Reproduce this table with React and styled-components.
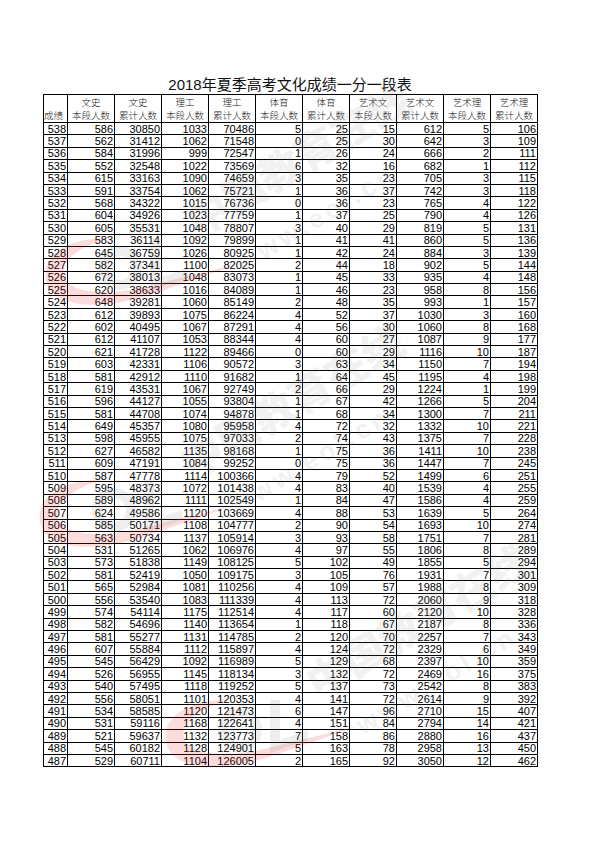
import React from 'react';
import styled, { createGlobalStyle } from 'styled-components';

const GlobalStyle = createGlobalStyle`
   html, body {
      margin: 0;
      padding: 0;
      background: #ffffff;
   }
`;

const Page = styled.div`
   position: relative;
   width: 600px;
   height: 848px;
   overflow: hidden;
   padding-top: 76px;
   box-sizing: border-box;
   background: #ffffff;
`;

const Title = styled.h1`
   margin: 0 0 0 43px;
   width: 494px;
   height: 18px;
   line-height: 18px;
   text-align: center;
   font-family: "Liberation Sans", "Noto Sans CJK SC", sans-serif;
   font-size: 15px;
   font-weight: 400;
   color: #111;
`;

const Table = styled.table`
   margin-left: 43px;
   width: 494px;
   table-layout: fixed;
   border-collapse: collapse;
   border: 1.5px solid #000;
`;

const HeadCell = styled.th`
   height: 27px;
   padding: 0;
   border: 1px solid #000;
   vertical-align: bottom;
   text-align: ${props => (props.$left ? 'left' : 'center')};
   font-family: "Noto Sans CJK SC", sans-serif;
   font-size: 9.5px;
   font-weight: 300;
   line-height: 13px;
   color: #222;
   white-space: nowrap;
   overflow: hidden;
`;

const Row = styled.tr`
   height: 12.4px;
`;

const Cell = styled.td`
   padding: 0 1px 0 0;
   border: 1px solid #000;
   text-align: right;
   font-family: "Liberation Sans", Arial, sans-serif;
   font-size: 11px;
   line-height: 10px;
   color: #000;
   white-space: nowrap;
   overflow: hidden;
`;

const Mark = styled.svg`
   position: absolute;
   left: ${props => props.$x}px;
   top: ${props => props.$y}px;
   width: 420px;
   height: 240px;
   overflow: visible;
   pointer-events: none;
`;

const heads = [
   ['文史', '本段人数'],
   ['文史', '累计人数'],
   ['理工', '本段人数'],
   ['理工', '累计人数'],
   ['体育', '本段人数'],
   ['体育', '累计人数'],
   ['艺术文', '本段人数'],
   ['艺术文', '累计人数'],
   ['艺术理', '本段人数'],
   ['艺术理', '累计人数'],
];

const raw = `538 586 30850 1033 70486 5 25 15 612 5 106
537 562 31412 1062 71548 0 25 30 642 3 109
536 584 31996 999 72547 1 26 24 666 2 111
535 552 32548 1022 73569 6 32 16 682 1 112
534 615 33163 1090 74659 3 35 23 705 3 115
533 591 33754 1062 75721 1 36 37 742 3 118
532 568 34322 1015 76736 0 36 23 765 4 122
531 604 34926 1023 77759 1 37 25 790 4 126
530 605 35531 1048 78807 3 40 29 819 5 131
529 583 36114 1092 79899 1 41 41 860 5 136
528 645 36759 1026 80925 1 42 24 884 3 139
527 582 37341 1100 82025 2 44 18 902 5 144
526 672 38013 1048 83073 1 45 33 935 4 148
525 620 38633 1016 84089 1 46 23 958 8 156
524 648 39281 1060 85149 2 48 35 993 1 157
523 612 39893 1075 86224 4 52 37 1030 3 160
522 602 40495 1067 87291 4 56 30 1060 8 168
521 612 41107 1053 88344 4 60 27 1087 9 177
520 621 41728 1122 89466 0 60 29 1116 10 187
519 603 42331 1106 90572 3 63 34 1150 7 194
518 581 42912 1110 91682 1 64 45 1195 4 198
517 619 43531 1067 92749 2 66 29 1224 1 199
516 596 44127 1055 93804 1 67 42 1266 5 204
515 581 44708 1074 94878 1 68 34 1300 7 211
514 649 45357 1080 95958 4 72 32 1332 10 221
513 598 45955 1075 97033 2 74 43 1375 7 228
512 627 46582 1135 98168 1 75 36 1411 10 238
511 609 47191 1084 99252 0 75 36 1447 7 245
510 587 47778 1114 100366 4 79 52 1499 6 251
509 595 48373 1072 101438 4 83 40 1539 4 255
508 589 48962 1111 102549 1 84 47 1586 4 259
507 624 49586 1120 103669 4 88 53 1639 5 264
506 585 50171 1108 104777 2 90 54 1693 10 274
505 563 50734 1137 105914 3 93 58 1751 7 281
504 531 51265 1062 106976 4 97 55 1806 8 289
503 573 51838 1149 108125 5 102 49 1855 5 294
502 581 52419 1050 109175 3 105 76 1931 7 301
501 565 52984 1081 110256 4 109 57 1988 8 309
500 556 53540 1083 111339 4 113 72 2060 9 318
499 574 54114 1175 112514 4 117 60 2120 10 328
498 582 54696 1140 113654 1 118 67 2187 8 336
497 581 55277 1131 114785 2 120 70 2257 7 343
496 607 55884 1112 115897 4 124 72 2329 6 349
495 545 56429 1092 116989 5 129 68 2397 10 359
494 526 56955 1145 118134 3 132 72 2469 16 375
493 540 57495 1118 119252 5 137 73 2542 8 383
492 556 58051 1101 120353 4 141 72 2614 9 392
491 534 58585 1120 121473 6 147 96 2710 15 407
490 531 59116 1168 122641 4 151 84 2794 14 421
489 521 59637 1132 123773 7 158 86 2880 16 437
488 545 60182 1128 124901 5 163 78 2958 13 450
487 529 60711 1104 126005 2 165 92 3050 12 462`;

const rows = raw.split('\n').map(line => line.trim().split(' '));

// faint site watermark: red swoosh, grey "oL" and the site name on a slant
const Watermark = ({ x, y }) => (
   <Mark $x={x} $y={y} viewBox="0 0 420 240">
      <g opacity="0.16">
         <path
            d="M70 150 C 20 150, 0 175, 10 198 C 22 222, 70 222, 120 204 L 200 176 L 118 196 C 70 210, 30 205, 26 188 C 22 170, 45 158, 70 150 Z"
            fill="#e0262b"
         />
      </g>
      <g opacity="0.12">
         <circle cx="82" cy="180" r="17" fill="none" stroke="#777" strokeWidth="10" />
         <path d="M112 150 L122 150 L122 190 L150 180 L150 190 L112 203 Z" fill="#777" />
      </g>
      <g fill="#888" opacity="0.11" fontFamily="'Noto Sans CJK SC', sans-serif" fontWeight="900">
         <text x="0" y="0" fontSize="42" transform="translate(160 150) rotate(-31)">中国教育在线</text>
         <text x="0" y="0" fontSize="26" fontFamily="'Liberation Sans', sans-serif" fontWeight="700" letterSpacing="4" transform="translate(205 185) rotate(-31)">www.eol.cn</text>
      </g>
   </Mark>
);

class App extends React.Component {
   render() {
      return (
         <Page>
            <GlobalStyle />
            <Title>2018年夏季高考文化成绩一分一段表</Title>
            <Table>
               <colgroup>
                  <col style={{ width: 24 }} />
                  {heads.map((h, i) => <col key={i} style={{ width: 47 }} />)}
               </colgroup>
               <thead>
                  <tr>
                     <HeadCell $left>成绩</HeadCell>
                     {heads.map((h, i) => (
                        <HeadCell key={i}>{h[0]}<br />{h[1]}</HeadCell>
                     ))}
                  </tr>
               </thead>
               <tbody>
                  {rows.map(r => (
                     <Row key={r[0]}>
                        {r.map((v, i) => <Cell key={i}>{v}</Cell>)}
                     </Row>
                  ))}
               </tbody>
            </Table>
            <Watermark x={38} y={88} />
            <Watermark x={32} y={330} />
            <Watermark x={158} y={550} />
         </Page>
      );
   }
}

export default App;
